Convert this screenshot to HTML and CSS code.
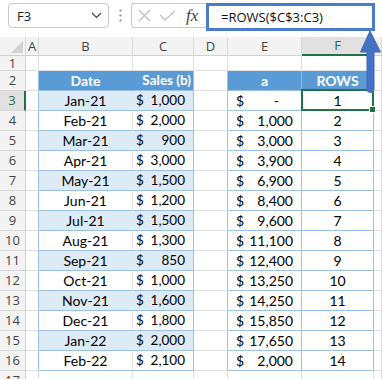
FILE: index.html
```html
<!DOCTYPE html>
<html lang="en">
<head>
    <meta charset="UTF-8">
    <title>ROWS function</title>
    <link rel="stylesheet" href="styles.css">
</head>
<body>
    <div class="toolbar">
        <div class="name-box">
            <span>F3</span>
            <svg width="11" height="7" viewBox="0 0 11 7"><path d="M1 1 L5.5 5.5 L10 1" fill="none" stroke="#444" stroke-width="1.2"/></svg>
        </div>
        <div class="grip">
            <svg width="3" height="13" viewBox="0 0 3 13"><circle cx="1.5" cy="1.5" r="1.1" fill="#8a8a8a"/><circle cx="1.5" cy="6.5" r="1.1" fill="#8a8a8a"/><circle cx="1.5" cy="11.5" r="1.1" fill="#8a8a8a"/></svg>
        </div>
        <div class="fx-group">
            <svg width="13" height="13" viewBox="0 0 13 13"><path d="M1 1 L12 12 M12 1 L1 12" stroke="#bdbdbd" stroke-width="1.1" fill="none"/></svg>
            <svg width="17" height="11" viewBox="0 0 17 11"><path d="M1 5 L6 10 L16 1" stroke="#bdbdbd" stroke-width="1.1" fill="none"/></svg>
            <span class="fx">fx</span>
        </div>
        <div class="formula">=ROWS($C$3:C3)</div>
    </div>

    <div class="sheet">
        <div class="row col-head">
            <div class="cell corner"><svg width="12" height="12" viewBox="0 0 12 12"><path d="M12 0 L12 12 L0 12 Z" fill="#d2d2d2"/></svg></div>
            <div class="cell">A</div>
            <div class="cell">B</div>
            <div class="cell">C</div>
            <div class="cell">D</div>
            <div class="cell">E</div>
            <div class="cell active">F</div>
            <div class="cell"></div>
        </div>
        <div class="row short">
            <div class="cell rh">1</div>
            <div class="cell"></div><div class="cell"></div><div class="cell"></div>
            <div class="cell"></div><div class="cell"></div><div class="cell"></div><div class="cell"></div>
        </div>
        <div class="row head">
            <div class="cell rh">2</div>
            <div class="cell edge"></div>
            <div class="cell date">Date</div>
            <div class="cell sales edge">Sales (b)</div>
            <div class="cell edge"></div>
            <div class="cell amt">a</div>
            <div class="cell num edge">ROWS</div>
            <div class="cell"></div>
        </div>
        <div class="row band">
            <div class="cell rh current">3</div>
            <div class="cell edge"></div>
            <div class="cell date">Jan-21</div>
            <div class="cell sales edge"><span>$</span><span>1,000</span></div>
            <div class="cell edge"></div>
            <div class="cell amt edge"><span>$</span><span class="dash">-</span></div>
            <div class="cell num edge selected">1</div>
            <div class="cell"></div>
        </div>
        <div class="row">
            <div class="cell rh">4</div>
            <div class="cell edge"></div>
            <div class="cell date">Feb-21</div>
            <div class="cell sales edge"><span>$</span><span>2,000</span></div>
            <div class="cell edge"></div>
            <div class="cell amt edge"><span>$</span><span>1,000</span></div>
            <div class="cell num edge">2</div>
            <div class="cell"></div>
        </div>
        <div class="row band">
            <div class="cell rh">5</div>
            <div class="cell edge"></div>
            <div class="cell date">Mar-21</div>
            <div class="cell sales edge"><span>$</span><span>900</span></div>
            <div class="cell edge"></div>
            <div class="cell amt edge"><span>$</span><span>3,000</span></div>
            <div class="cell num edge">3</div>
            <div class="cell"></div>
        </div>
        <div class="row">
            <div class="cell rh">6</div>
            <div class="cell edge"></div>
            <div class="cell date">Apr-21</div>
            <div class="cell sales edge"><span>$</span><span>3,000</span></div>
            <div class="cell edge"></div>
            <div class="cell amt edge"><span>$</span><span>3,900</span></div>
            <div class="cell num edge">4</div>
            <div class="cell"></div>
        </div>
        <div class="row band">
            <div class="cell rh">7</div>
            <div class="cell edge"></div>
            <div class="cell date">May-21</div>
            <div class="cell sales edge"><span>$</span><span>1,500</span></div>
            <div class="cell edge"></div>
            <div class="cell amt edge"><span>$</span><span>6,900</span></div>
            <div class="cell num edge">5</div>
            <div class="cell"></div>
        </div>
        <div class="row">
            <div class="cell rh">8</div>
            <div class="cell edge"></div>
            <div class="cell date">Jun-21</div>
            <div class="cell sales edge"><span>$</span><span>1,200</span></div>
            <div class="cell edge"></div>
            <div class="cell amt edge"><span>$</span><span>8,400</span></div>
            <div class="cell num edge">6</div>
            <div class="cell"></div>
        </div>
        <div class="row band">
            <div class="cell rh">9</div>
            <div class="cell edge"></div>
            <div class="cell date">Jul-21</div>
            <div class="cell sales edge"><span>$</span><span>1,500</span></div>
            <div class="cell edge"></div>
            <div class="cell amt edge"><span>$</span><span>9,600</span></div>
            <div class="cell num edge">7</div>
            <div class="cell"></div>
        </div>
        <div class="row">
            <div class="cell rh">10</div>
            <div class="cell edge"></div>
            <div class="cell date">Aug-21</div>
            <div class="cell sales edge"><span>$</span><span>1,300</span></div>
            <div class="cell edge"></div>
            <div class="cell amt edge"><span>$</span><span>11,100</span></div>
            <div class="cell num edge">8</div>
            <div class="cell"></div>
        </div>
        <div class="row band">
            <div class="cell rh">11</div>
            <div class="cell edge"></div>
            <div class="cell date">Sep-21</div>
            <div class="cell sales edge"><span>$</span><span>850</span></div>
            <div class="cell edge"></div>
            <div class="cell amt edge"><span>$</span><span>12,400</span></div>
            <div class="cell num edge">9</div>
            <div class="cell"></div>
        </div>
        <div class="row">
            <div class="cell rh">12</div>
            <div class="cell edge"></div>
            <div class="cell date">Oct-21</div>
            <div class="cell sales edge"><span>$</span><span>1,000</span></div>
            <div class="cell edge"></div>
            <div class="cell amt edge"><span>$</span><span>13,250</span></div>
            <div class="cell num edge">10</div>
            <div class="cell"></div>
        </div>
        <div class="row band">
            <div class="cell rh">13</div>
            <div class="cell edge"></div>
            <div class="cell date">Nov-21</div>
            <div class="cell sales edge"><span>$</span><span>1,600</span></div>
            <div class="cell edge"></div>
            <div class="cell amt edge"><span>$</span><span>14,250</span></div>
            <div class="cell num edge">11</div>
            <div class="cell"></div>
        </div>
        <div class="row">
            <div class="cell rh">14</div>
            <div class="cell edge"></div>
            <div class="cell date">Dec-21</div>
            <div class="cell sales edge"><span>$</span><span>1,800</span></div>
            <div class="cell edge"></div>
            <div class="cell amt edge"><span>$</span><span>15,850</span></div>
            <div class="cell num edge">12</div>
            <div class="cell"></div>
        </div>
        <div class="row band">
            <div class="cell rh">15</div>
            <div class="cell edge"></div>
            <div class="cell date">Jan-22</div>
            <div class="cell sales edge"><span>$</span><span>2,000</span></div>
            <div class="cell edge"></div>
            <div class="cell amt edge"><span>$</span><span>17,650</span></div>
            <div class="cell num edge">13</div>
            <div class="cell"></div>
        </div>
        <div class="row">
            <div class="cell rh">16</div>
            <div class="cell edge"></div>
            <div class="cell date">Feb-22</div>
            <div class="cell sales edge"><span>$</span><span>2,100</span></div>
            <div class="cell edge"></div>
            <div class="cell amt edge"><span>$</span><span>2,000</span></div>
            <div class="cell num edge">14</div>
            <div class="cell"></div>
        </div>
        <div class="row">
            <div class="cell rh">17</div>
            <div class="cell"></div><div class="cell"></div><div class="cell"></div>
            <div class="cell"></div><div class="cell"></div><div class="cell"></div><div class="cell"></div>
        </div>
    </div>

    <!-- callout arrow from the selected cell up to the formula -->
    <svg class="arrow" width="24" height="68" viewBox="0 0 24 68">
        <path d="M12 3 L22.5 24 L16 24 L16 61 A3.5 3.5 0 0 1 9 61 L9 24 L2.5 24 Z" fill="#4472c4" stroke="#3d67b3" stroke-width="1"/>
    </svg>
</body>
</html>
```

FILE: styles.css
```css
:root {
    --grid: #e1e1e1;
    --head-bg: #f3f3f3;
    --table-blue: #5b9bd5;
    --table-line: #9bc2e6;
    --band: #ddebf7;
    --excel-green: #217346;
    --callout: #4a7cc9;
}

body {
    margin: 0;
    background: white;
    font-family: Lato, 'Open Sans', sans-serif;
    color: #000;
    overflow: hidden;
    position: relative;
}

/* formula bar */

.toolbar {
    display: flex;
    align-items: flex-start;
    height: 37px;
    padding-top: 3px;
    box-sizing: border-box;
    font-family: 'Open Sans', sans-serif;
}

.name-box {
    margin-left: 8px;
    width: 101px;
    height: 25px;
    box-sizing: border-box;
    border: 1px solid #c8c8c8;
    border-radius: 4px;
    display: flex;
    align-items: center;
    justify-content: space-between;
    padding: 0 6px 0 8px;
    font-size: 13px;
    color: #222;
}

.grip {
    width: 22px;
    height: 25px;
    display: flex;
    align-items: center;
    justify-content: center;
}

.fx-group {
    width: 75px;
    height: 25px;
    box-sizing: border-box;
    border: 1px solid #c8c8c8;
    border-right: none;
    border-radius: 4px 0 0 4px;
    display: flex;
    align-items: center;
    padding-left: 6px;
    gap: 8px;
}

.fx {
    font-family: 'Liberation Serif', serif;
    font-style: italic;
    font-size: 17px;
    color: #444;
    margin-left: 2px;
}

.formula {
    width: 169px;
    height: 28px;
    box-sizing: border-box;
    border: 3px solid var(--callout);
    display: flex;
    align-items: center;
    padding-left: 12px;
    font-size: 13px;
    color: #111;
}

/* sheet grid */

.row {
    display: grid;
    grid-template-columns: 26px 13px 94px 61px 34px 74px 72px 1fr;
    height: 20px;
}

.row.short {
    height: 15px;
}

.cell {
    box-sizing: border-box;
    border-right: 1px solid var(--grid);
    border-bottom: 1px solid var(--grid);
    display: flex;
    align-items: center;
    font-size: 14px;
    line-height: 1;
    white-space: nowrap;
}

.col-head {
    height: 19px;
}

.col-head .cell {
    background: var(--head-bg);
    border-right-color: #d8d8d8;
    border-bottom-color: #d0d0d0;
    justify-content: center;
    font-family: 'Open Sans', sans-serif;
    font-size: 13px;
    color: #444;
}

.col-head .corner {
    justify-content: flex-end;
    align-items: flex-end;
    padding: 0 2px 2px 0;
}

.col-head .active {
    background: #e1e1e1;
    border-bottom: 2px solid var(--excel-green);
    color: var(--excel-green);
}

.rh {
    background: var(--head-bg);
    border-right-color: #d0d0d0;
    border-bottom-color: #d8d8d8;
    justify-content: center;
    font-family: 'Open Sans', sans-serif;
    font-size: 13px;
    color: #444;
}

.rh.current {
    background: #e1e1e1;
    border-right: 2px solid var(--excel-green);
    color: #2f6b4a;
}

.edge {
    border-right-color: var(--table-line);
}

/* the two tables */

.date, .sales, .amt, .num {
    border-bottom-color: var(--table-line);
}

.date, .num {
    justify-content: center;
}

.sales, .amt {
    justify-content: space-between;
}

.sales {
    padding: 0 8px 0 3px;
    font-size: 13.5px;
}

.amt {
    padding: 0 8px 0 8px;
}

.amt .dash {
    margin-right: 14px;
}

.band .date, .band .sales {
    background: var(--band);
}

.band .date {
    border-right-color: var(--band);
}

.head .date, .head .sales, .head .amt, .head .num {
    background: var(--table-blue);
    color: white;
    font-weight: 700;
}

.head .date {
    border-right-color: var(--table-blue);
}

.head .sales {
    justify-content: flex-end;
    padding-right: 2px;
    font-size: 13.5px;
}

.head .amt {
    justify-content: center;
    border-right-color: #8db8e3;
}

.selected {
    position: relative;
}

.selected::after {
    content: "";
    position: absolute;
    top: -2px;
    left: -1px;
    right: -1px;
    bottom: -1px;
    border: 2px solid var(--excel-green);
    z-index: 2;
}

.selected::before {
    content: "";
    position: absolute;
    right: -3px;
    bottom: -3px;
    width: 5px;
    height: 5px;
    background: var(--excel-green);
    border: 1px solid white;
    z-index: 3;
}

.arrow {
    position: absolute;
    left: 358px;
    top: 28px;
    z-index: 5;
}
```
